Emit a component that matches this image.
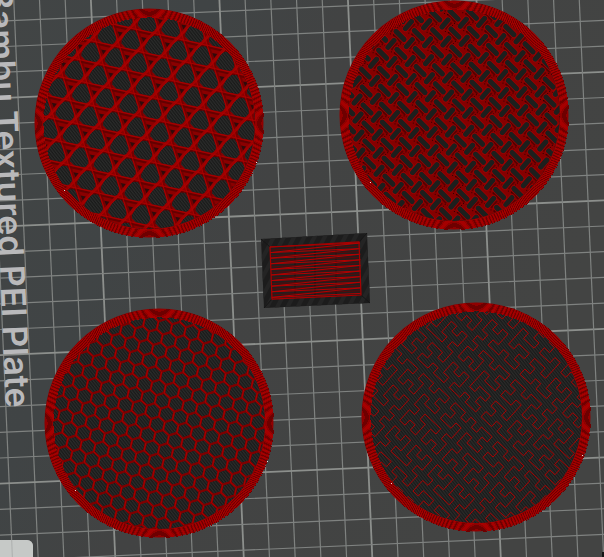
import { ReactNode } from 'react';

type Point = [number, number];

const RADIUS = 114.5;
const INNER = 106;
const WALL_WIDTH = 1.08;

const toPoints = (pts: Point[]) => pts.map((p) => p.join(',')).join(' ');

const range = (from: number, to: number) => Array.from({ length: to - from + 1 }, (_, i) => from + i);

const polar = (length: number, degrees: number): Point => [
  length * Math.cos((degrees * Math.PI) / 180),
  length * Math.sin((degrees * Math.PI) / 180),
];

// All lattice nodes that fall inside the disc
const lattice = (a: Point, b: Point, origin: Point, reach = INNER + 14): Point[] => {
  const nodes: Point[] = [];
  for (const i of range(-20, 20)) {
    for (const j of range(-20, 20)) {
      const x = origin[0] + i * a[0] + j * b[0];
      const y = origin[1] + i * a[1] + j * b[1];
      if (Math.hypot(x, y) < reach) nodes.push([x, y]);
    }
  }
  return nodes;
};

// Ripples where the thin walls beat against the pixel grid
const wallRipples = (from: number, to: number) => {
  let d = '';
  for (const y of range(-115, 115)) {
    for (const x of range(-115, 115)) {
      const r = Math.hypot(x, y);
      if (r > RADIUS || r < INNER) continue;
      const phase = ((RADIUS - r) / WALL_WIDTH) % 1;
      if (phase >= from && phase < to) d += `M${x} ${y}h1v1h-1z`;
    }
  }
  return d;
};

const DARK_RIPPLES = wallRipples(0, 0.3);
const LIGHT_RIPPLES = wallRipples(0.5, 0.85);

// Hilbert curve cell lookup
const hilbert = (n: number, index: number): Point => {
  let x = 0;
  let y = 0;
  let t = index;
  for (let s = 1; s < n; s *= 2) {
    const rx = 1 & (t >> 1);
    const ry = 1 & (t ^ rx);
    if (ry === 0) {
      if (rx === 1) {
        x = s - 1 - x;
        y = s - 1 - y;
      }
      [x, y] = [y, x];
    }
    x += s * rx;
    y += s * ry;
    t = t >> 2;
  }
  return [x, y];
};

const BedGrid = () => (
  <g transform="translate(95 94) rotate(-2.5)">
    {range(-10, 24).map((i) => {
      const major = i % 5 === 0;
      const at = i * 25.68;
      return (
        <g key={i} stroke={major ? '#8c8f8c' : '#7f8280'} strokeWidth={major ? 1.8 : 1.2}>
          <line x1={at} x2={at} y1={-200} y2={700} />
          <line y1={at} y2={at} x1={-200} x2={700} />
        </g>
      );
    })}
  </g>
);

// A sliced disc: outer walls, bottom layer and the infill given as children
const Disc = ({ x, y, children }: { x: number; y: number; children: ReactNode }) => (
  <g transform={`translate(${x} ${y})`}>
    <circle r={INNER + 1} fill="#191a19" />
    <circle r={INNER + 1} fill="url(#skin)" />
    <g clipPath="url(#disc-clip)">{children}</g>
    <circle r={(RADIUS + INNER) / 2} fill="none" stroke="#900000" strokeWidth={RADIUS - INNER} />
    <path d={DARK_RIPPLES} fill="#6e0000" />
    <path d={LIGHT_RIPPLES} fill="#a60000" />
  </g>
);

const TRI_CELLS = lattice(polar(24.25, 12.7), polar(24.25, 72.7), [-6, 27], INNER + 24);
const TRI_HOLE = 'M-9 4L-9 1L-5 -6L-1 -9H4L6 -6L9 3V6L7 9L5 10L-5 8Z';

const TriangleInfill = () => (
  <g>
    <circle r={INNER} fill="#8a0000" />
    {TRI_CELLS.map(([x, y], i) => (
      <g key={i} transform={`translate(${x} ${y})`}>
        <line x1={-13} y1={9} x2={10} y2={14} stroke="#640000" strokeWidth={2} />
        <line x1={6} y1={-13} x2={14} y2={10} stroke="#740000" strokeWidth={2} />
        <line x1={-15} y1={4} x2={2} y2={-15} stroke="#9c0000" strokeWidth={3} />
      </g>
    ))}
    {TRI_CELLS.map(([x, y], i) => (
      <g key={i} transform={`translate(${x} ${y})`}>
        <path d={TRI_HOLE} fill="#191a19" />
        <path d={TRI_HOLE} fill="url(#skin)" />
        <polygon points="-13,-8 -8,-7 -11,-3" fill="#300a0a" />
      </g>
    ))}
    <g stroke="#ac0000" strokeWidth={0.9}>
      {TRI_CELLS.map(([x, y], i) => (
        <g key={i} transform={`translate(${x} ${y})`}>
          <line x1={-13.4} y1={7} x2={10.3} y2={12.3} />
          <line x1={-14.4} y1={4.2} x2={2.1} y2={-13.7} />
          <line x1={4.6} y1={-13.7} x2={11.8} y2={9.5} />
        </g>
      ))}
    </g>
  </g>
);

const GyroidInfill = () => {
  const cells = lattice([18.3, -0.8], [0.9, 18], [0.9, -82]);
  return (
    <g>
      <circle r={INNER} fill="#860000" />
      {cells.map(([x, y], i) => (
        <g key={i} transform={`translate(${x} ${y})`}>
          <line x1={-6} y1={-1} x2={2} y2={7} stroke="#560000" strokeWidth={3} />
          <line x1={-9} y1={14} x2={-3} y2={7} stroke="#5c0000" strokeWidth={3} />
          <g strokeLinecap="round">
            <line x1={-4} y1={-4} x2={4} y2={4} stroke="#a00000" strokeWidth={6.6} />
            <line x1={-12} y1={12} x2={-6} y2={5} stroke="#a00000" strokeWidth={6.6} />
            <line x1={-4} y1={-4} x2={4} y2={4} stroke="#1d1f1d" strokeWidth={5.2} />
            <line x1={-12} y1={12} x2={-6} y2={5} stroke="#1d1f1d" strokeWidth={5.2} />
          </g>
          <g fill="#300000">
            <rect x={-10} y={-2} width={1} height={1} />
            <rect x={0} y={8} width={1} height={1} />
            <rect x={-7} y={-1} width={1} height={1} />
            <rect x={2} y={-9} width={1} height={1} />
            <rect x={-2} y={10} width={1} height={1} />
          </g>
        </g>
      ))}
    </g>
  );
};

const HEX_CORNERS = range(0, 5).map((i) => polar(8.08, 42.5 + i * 60));

const HoneycombInfill = () => (
  <g>
    {lattice(polar(14, 12.5), polar(14, -47.5), [-9.2, 99.2]).map(([x, y], i) => (
      <g key={i} transform={`translate(${x} ${y})`} fill="none">
        <polygon points={toPoints(HEX_CORNERS)} stroke="#7c0000" strokeWidth={2} />
        <polyline points={toPoints(HEX_CORNERS.slice(0, 4))} stroke="#a80000" strokeWidth={1} />
      </g>
    ))}
  </g>
);

const HILBERT_PATH = toPoints(
  range(0, 4095).map((i) => {
    const [x, y] = hilbert(64, i);
    return [(x - 31.5) * 7.2, (y - 31.5) * 7.2] as Point;
  })
);

const HilbertInfill = () => (
  <g transform="rotate(42.5)" fill="none">
    <polyline points={HILBERT_PATH} stroke="#b00000" strokeWidth={0.9} />
  </g>
);

const ZIGZAG = range(0, 9).flatMap((i): Point[] => [
  [270 + i * 0.2, 247 + i * 5.6],
  [360 + i * 0.1, 243 + i * 5.6],
]);

// Purge block between the four discs
const PurgeBlock = () => (
  <g>
    <polygon points="261,239 367,233 370,303 264,308" fill="#1c1c1c" />
    <polygon points="261,239 367,233 370,303 264,308" fill="url(#rim)" />
    <polygon points="270,247 359,242 361,295 272,299" fill="#241e1e" />
    <g stroke="#161616" strokeWidth={1}>
      <path d="M261 239l9 8M367 233l-8 9M370 303l-9-8M264 308l8-9" />
      <path d="M295 246v52M315 245v52M336 244v52" stroke="#181212" />
    </g>
    <g stroke="#560a0a" strokeWidth={1}>
      {range(0, 8).map((i) => (
        <line key={i} x1={271} y1={250 + i * 5.6} x2={360} y2={246 + i * 5.6} />
      ))}
    </g>
    <polyline points={toPoints(ZIGZAG)} fill="none" stroke="#b40000" strokeWidth={1} />
    <polygon points="270,247 359,242 361,295 272,299" fill="none" stroke="#a80000" strokeWidth={1.2} />
  </g>
);

const SEAMS: Point[] = [
  [256, 162],
  [64, 190],
  [370, 182],
  [582, 455],
  [391, 483],
  [75, 490],
  [267, 461],
];

export default function App() {
  return (
    <main className="h-screen w-full overflow-hidden bg-[#424444]">
      <svg className="block h-full w-full" viewBox="0 0 604 557" preserveAspectRatio="xMidYMid slice">
        <defs>
          <clipPath id="disc-clip">
            <circle r={INNER} />
          </clipPath>
          <linearGradient id="bed" x1="0" y1="0" x2="1" y2="0.4">
            <stop offset="0" stopColor="#424545" />
            <stop offset="0.3" stopColor="#404445" />
            <stop offset="0.5" stopColor="#424343" />
            <stop offset="1" stopColor="#434443" />
          </linearGradient>
          <pattern id="skin" width="2.4" height="8" patternUnits="userSpaceOnUse" patternTransform="rotate(-38)">
            <rect width="1.2" height="8" fill="#2b2c2b" />
          </pattern>
          <pattern id="rim" width="9" height="9" patternUnits="userSpaceOnUse" patternTransform="rotate(28)">
            <rect width="4" height="9" fill="#242424" />
          </pattern>
        </defs>

        <rect width="604" height="557" fill="url(#bed)" />
        <rect x="-20" y="540" width="53" height="40" rx="6" fill="#c6c9c7" />
        <BedGrid />
        <rect x="-20" y="540" width="53" height="40" rx="6" fill="#c6c9c7" fillOpacity="0.7" />

        <text
          transform="translate(6 408) rotate(87.5)"
          textAnchor="end"
          className="fill-[#b9b9bb] font-['Inter',sans-serif] text-[34px] font-semibold"
        >
          Bambu Textured PEI Plate
        </text>

        <Disc x={149} y={123}>
          <TriangleInfill />
        </Disc>
        <Disc x={454} y={115}>
          <GyroidInfill />
        </Disc>
        <Disc x={159} y={423}>
          <HoneycombInfill />
        </Disc>
        <Disc x={476} y={417}>
          <HilbertInfill />
        </Disc>
        <PurgeBlock />

        {SEAMS.map(([x, y]) => (
          <rect key={`${x}-${y}`} x={x} y={y} width={1} height={1} fill="#e8dede" />
        ))}
        <rect x="602" y="552" width="2" height="5" fill="#151515" />
      </svg>
    </main>
  );
}
